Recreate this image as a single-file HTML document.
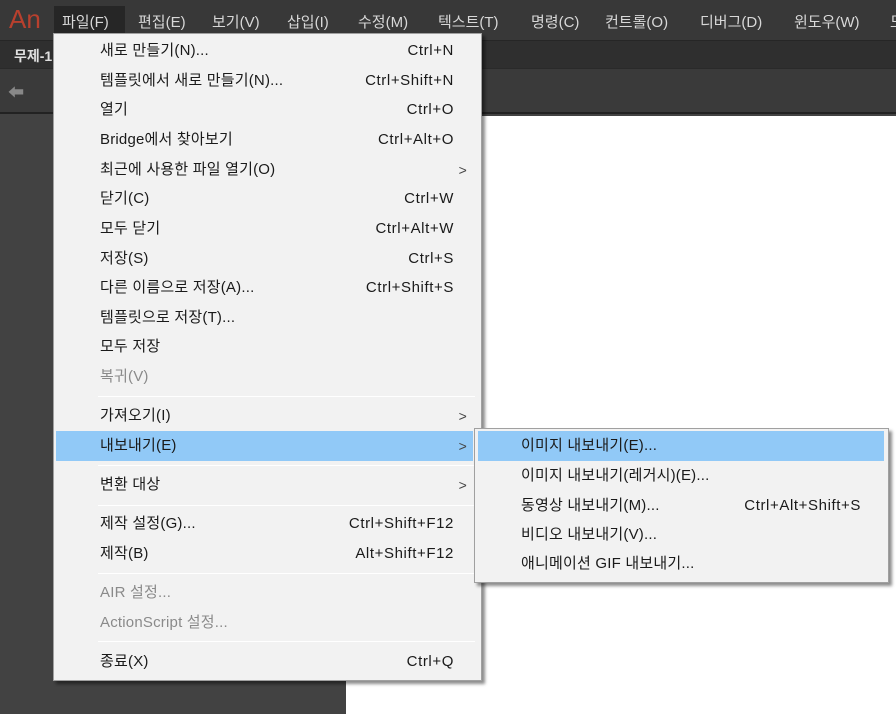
<!DOCTYPE html>
<html><head><meta charset="utf-8"><style>
*{margin:0;padding:0;box-sizing:border-box}
body{width:896px;height:714px;overflow:hidden;background:#424242;font-family:"Liberation Sans","Noto Sans CJK KR",sans-serif;position:relative}
.bar{position:absolute;left:0;top:0;width:896px;height:40px;background:#383838}
.bar span{position:absolute;top:11px;font-size:15px;color:#d8d8d8}
.an{position:absolute;left:9px;top:4px;font-size:26px;color:#b8402e}
.tabs{position:absolute;left:0;top:40px;width:896px;height:28px;background:#2f2f2f;border-top:1px solid #262626}
.tool{position:absolute;left:0;top:68px;width:896px;height:46px;background:#3a3a3a;border-top:1px solid #2a2a2a;border-bottom:2px solid #222}
.canvas{position:absolute;left:346px;top:116px;width:550px;height:598px;background:#fff}
.menu{position:absolute;background:#f2f2f2;border:1px solid #a0a0a0;box-shadow:3px 3px 3px rgba(0,0,0,.45)}
.it{position:absolute;left:0;right:0;height:30px;font-size:15px;color:#1a1a1a;line-height:30px;letter-spacing:0.2px}
.it .t{position:absolute;left:46px}
.it .k{position:absolute;right:27px;letter-spacing:0.6px}
.it .a{position:absolute;right:14px;font-size:14px;color:#444}
.dis{color:#8a8a8a}
.hl{background:#91c9f7}
.sep{position:absolute;left:44px;right:6px;height:1px;background:#d6d6d6;border-bottom:1px solid #fff}
</style></head><body>
<div class="bar">
<div class="an">An</div>
<div style="position:absolute;left:54px;top:6px;width:71px;height:28px;background:#262626"></div>
<span style="left:62px">파일(F)</span>
<span style="left:138px">편집(E)</span>
<span style="left:212px">보기(V)</span>
<span style="left:287px">삽입(I)</span>
<span style="left:358px">수정(M)</span>
<span style="left:438px">텍스트(T)</span>
<span style="left:531px">명령(C)</span>
<span style="left:605px">컨트롤(O)</span>
<span style="left:700px">디버그(D)</span>
<span style="left:794px">윈도우(W)</span>
<span style="left:890px">도</span>
</div>
<div class="tabs"><span style="position:absolute;left:14px;top:5px;font-size:14px;color:#e0e0e0;font-weight:bold">무제-1</span></div>
<div class="tool"><span style="position:absolute;left:8px;top:10px;color:#888;font-size:16px">⬅</span></div>
<div class="canvas"></div>

<div class="menu" style="left:53px;top:33px;width:429px;height:648px">
<div class="it" style="top:2px"><span class="t">새로 만들기(N)...</span><span class="k">Ctrl+N</span></div>
<div class="it" style="top:32px"><span class="t">템플릿에서 새로 만들기(N)...</span><span class="k">Ctrl+Shift+N</span></div>
<div class="it" style="top:61px"><span class="t">열기</span><span class="k">Ctrl+O</span></div>
<div class="it" style="top:91px"><span class="t">Bridge에서 찾아보기</span><span class="k">Ctrl+Alt+O</span></div>
<div class="it" style="top:121px"><span class="t">최근에 사용한 파일 열기(O)</span><span class="a">&gt;</span></div>
<div class="it" style="top:150px"><span class="t">닫기(C)</span><span class="k">Ctrl+W</span></div>
<div class="it" style="top:180px"><span class="t">모두 닫기</span><span class="k">Ctrl+Alt+W</span></div>
<div class="it" style="top:210px"><span class="t">저장(S)</span><span class="k">Ctrl+S</span></div>
<div class="it" style="top:239px"><span class="t">다른 이름으로 저장(A)...</span><span class="k">Ctrl+Shift+S</span></div>
<div class="it" style="top:269px"><span class="t">템플릿으로 저장(T)...</span></div>
<div class="it" style="top:298px"><span class="t">모두 저장</span></div>
<div class="it dis" style="top:328px"><span class="t">복귀(V)</span></div>
<div class="sep" style="top:362px"></div>
<div class="it" style="top:367px"><span class="t">가져오기(I)</span><span class="a">&gt;</span></div>
<div class="it hl" style="top:397px;left:2px;right:8px"><span class="t" style="left:44px">내보내기(E)</span><span class="a" style="right:6px">&gt;</span></div>
<div class="sep" style="top:431px"></div>
<div class="it" style="top:436px"><span class="t">변환 대상</span><span class="a">&gt;</span></div>
<div class="sep" style="top:471px"></div>
<div class="it" style="top:475px"><span class="t">제작 설정(G)...</span><span class="k">Ctrl+Shift+F12</span></div>
<div class="it" style="top:505px"><span class="t">제작(B)</span><span class="k">Alt+Shift+F12</span></div>
<div class="sep" style="top:539px"></div>
<div class="it dis" style="top:544px"><span class="t">AIR 설정...</span></div>
<div class="it dis" style="top:574px"><span class="t">ActionScript 설정...</span></div>
<div class="sep" style="top:607px"></div>
<div class="it" style="top:613px"><span class="t">종료(X)</span><span class="k">Ctrl+Q</span></div>
</div>

<div class="menu" style="left:474px;top:428px;width:415px;height:155px">
<div class="it hl" style="top:2px;left:3px;right:4px"><span class="t" style="left:43px">이미지 내보내기(E)...</span></div>
<div class="it" style="top:32px"><span class="t">이미지 내보내기(레거시)(E)...</span></div>
<div class="it" style="top:62px"><span class="t">동영상 내보내기(M)...</span><span class="k">Ctrl+Alt+Shift+S</span></div>
<div class="it" style="top:91px"><span class="t">비디오 내보내기(V)...</span></div>
<div class="it" style="top:120px"><span class="t">애니메이션 GIF 내보내기...</span></div>
</div>
</body></html>
